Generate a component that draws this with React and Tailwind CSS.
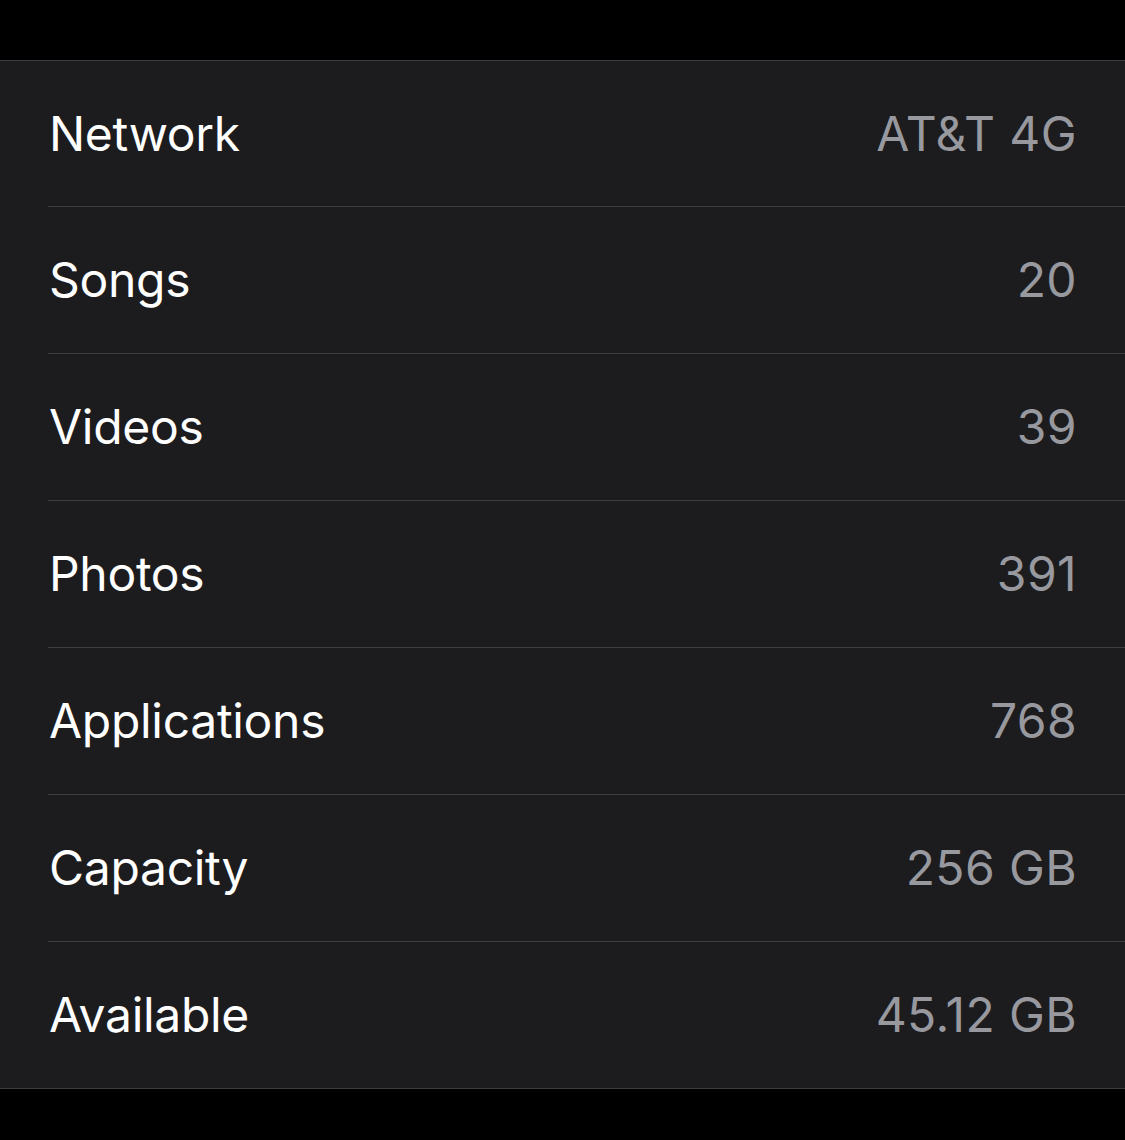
import React from "react";

const rows = [
  { label: "Network", value: "AT&T 4G" },
  { label: "Songs", value: "20" },
  { label: "Videos", value: "39" },
  { label: "Photos", value: "391" },
  { label: "Applications", value: "768" },
  { label: "Capacity", value: "256 GB" },
  { label: "Available", value: "45.12 GB" },
];

export default function App() {
  return (
    <div className="min-h-[1140px] w-full bg-black pt-[60px] font-['Inter',sans-serif]">
      <div className="border-y border-[#3d3d40] bg-[#1c1c1e] pl-12">
        {rows.map((row, i) => {
          const last = i === rows.length - 1;
          const height = i === 0 || last ? "h-[146px]" : "h-[147px]";
          return (
            <div
              key={row.label}
              className={
                "flex items-center justify-between pr-12 " +
                height +
                (last ? "" : " border-b border-[#3d3d40]")
              }
            >
              <span className="pl-[1px] text-[48px] tracking-[-0.3px] text-white">{row.label}</span>
              <span className="text-[48px] tracking-[0.4px] text-[#98989f]">{row.value}</span>
            </div>
          );
        })}
      </div>
    </div>
  );
}
